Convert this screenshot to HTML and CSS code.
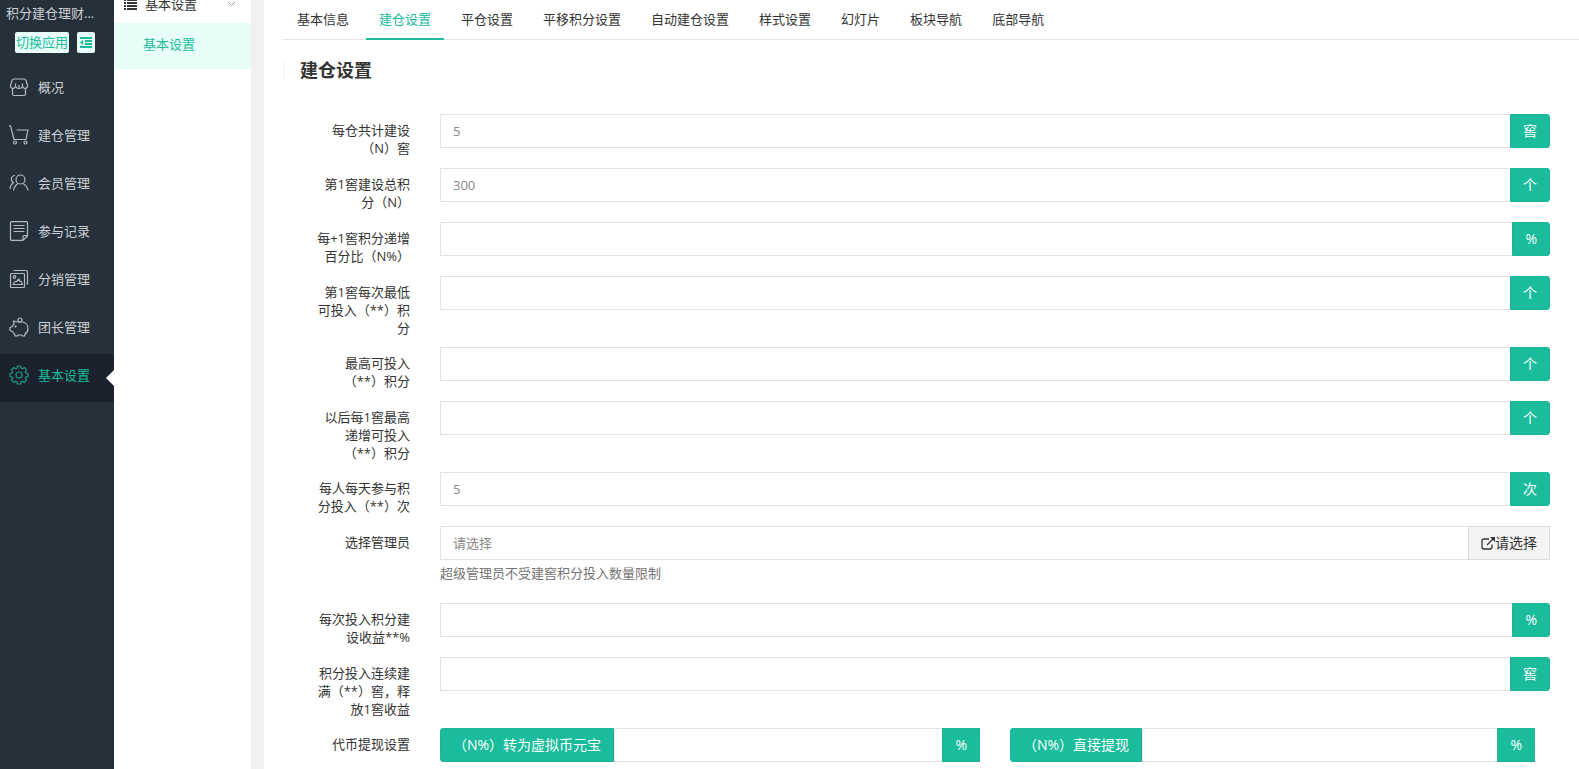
FILE: index.html
```html
<!DOCTYPE html>
<html lang="zh-CN">
<head>
<meta charset="utf-8">
<title>建仓设置</title>
<link rel="stylesheet" href="styles.css">
</head>
<body>
<div class="app">
  <aside class="sidebar">
    <div class="app-name">积分建仓理财...</div>
    <div class="app-tools">
      <button type="button" class="tool">切换应用</button>
      <button type="button" class="tool tool-icon" aria-label="收起菜单">
        <svg width="12" height="11" viewBox="0 0 12 11" fill="currentColor"><path d="M0 0h12v2H0zM5 3h7v2H5zM5 6h7v2H5zM0 9h12v2H0zM3 3v5L0 5.500z"/></svg>
      </button>
    </div>
    <nav class="menu">
      <a class="menu-item" href="#"><svg class="icon" viewBox="0 0 20 20"><path d="M5 2h10q1.500 0 2 1.500L18.500 8c.8 4-4.300 4.500-5 1-.5 3.300-6.500 3.300-7 0-.7 3.500-5.800 3-5-1L3 3.500Q3.500 2 5 2zM6.500 9V6.500M13.500 9V6.500M10 11V8M3.500 11.500V17q0 1.500 1.500 1.500h10q1.500 0 1.500-1.500v-5.500"/></svg>概况</a>
      <a class="menu-item" href="#"><svg class="icon" viewBox="0 0 20 20"><path d="M0 .8h1.500L5 14.500h12M7.500 5H19l-2 9.500"/><circle cx="6" cy="17.500" r="1.500"/><circle cx="16.500" cy="17.500" r="1.500"/></svg>建仓管理</a>
      <a class="menu-item" href="#"><svg class="icon" viewBox="0 0 20 20"><circle cx="11.500" cy="6.500" r="4.500"/><path d="M9 10.500c-2.500 1.500-4 4-4.500 7M14 10.500c2.500 1.500 4.500 4 5 7M6 2.500C3 2.500 2 5 2.500 7c.3 1.300 1 2 2 2.500C2.500 11 1.200 13 1 16"/></svg>会员管理</a>
      <a class="menu-item" href="#"><svg class="icon" viewBox="0 0 20 20"><path d="M2.500.7h15q1 0 1 1V15L14 19.300H2.500q-1 0-1-1V1.700q0-1 1-1zM18.500 14.500H15q-1 0-1 1v4M4.500 4.500h11M4.500 7.500h11M4.500 10.500h11"/></svg>参与记录</a>
      <a class="menu-item" href="#"><svg class="icon" viewBox="0 0 20 20"><path d="M2.500 4.500h12q1 0 1 1v12q0 1-1 1h-12q-1 0-1-1v-12q0-1 1-1zM4.500 1.500h13q1 0 1 1v12.500h-1M4 15.500l2-3h1.500L10 10l1 2.500h1l1.500 3z"/><circle cx="5.500" cy="8" r="1.300"/></svg>分销管理</a>
      <a class="menu-item" href="#"><svg class="icon" viewBox="0 0 20 20"><path d="M8.500 5h5c3.500.5 5.500 3.500 5.500 6.500 0 2.500-1.300 4.500-3 5.500l-.5 2h-2.500l-.5-1H9l-.5 1H6l-.5-2c-1-.8-1.500-1.700-2-2.500L1 13.500v-3l2-.7c.5-1 1-1.700 2-2.500L4.500 4z"/><circle cx="11" cy="3" r="2"/><circle cx="6.500" cy="9.500" r=".5"/></svg>团长管理</a>
      <a class="menu-item active" href="#"><svg class="icon" viewBox="0 0 20 20"><path d="M8.300 1h3.400l.3 2.100 1.500.6 1.700-1.300 2.400 2.400-1.300 1.700.6 1.500 2.100.3v3.400l-2.100.3-.6 1.500 1.300 1.700-2.400 2.400-1.700-1.300-1.500.6-.3 2.100H8.300L8 16.900l-1.500-.6-1.700 1.300-2.400-2.400 1.300-1.700-.6-1.500L1 11.700V8.300L3.100 8l.6-1.500-1.300-1.700 2.400-2.400 1.700 1.300L8 3.100z"/><circle cx="10" cy="10" r="3"/></svg>基本设置</a>
    </nav>
  </aside>

  <aside class="subnav">
    <a class="subnav-head" href="#">
      <svg width="13" height="11" viewBox="0 0 13 11" fill="currentColor"><path d="M0 0h2v2H0zM3 0h10v2H3zM0 3h2v2H0zM3 3h10v2H3zM0 6h2v2H0zM3 6h10v2H3zM0 9h2v2H0zM3 9h10v2H3z"/></svg>
      <span>基本设置</span>
      <svg class="chevron" width="9" height="6" viewBox="0 0 9 6"><path d="M1 1l3.500 3.500L8 1"/></svg>
    </a>
    <a class="subnav-item" href="#">基本设置</a>
  </aside>

  <main class="main">
    <nav class="tabs">
      <a class="tab" href="#">基本信息</a>
      <a class="tab active" href="#">建仓设置</a>
      <a class="tab" href="#">平仓设置</a>
      <a class="tab" href="#">平移积分设置</a>
      <a class="tab" href="#">自动建仓设置</a>
      <a class="tab" href="#">样式设置</a>
      <a class="tab" href="#">幻灯片</a>
      <a class="tab" href="#">板块导航</a>
      <a class="tab" href="#">底部导航</a>
    </nav>
    <h1 class="title">建仓设置</h1>
    <form class="form">
      <div class="row"><label for="f1">每仓共计建设（N）窖</label><div class="field"><div class="group"><input id="f1" type="text" value="5"><span class="addon">窖</span></div></div></div>
      <div class="row"><label for="f2">第1窖建设总积分（N）</label><div class="field"><div class="group"><input id="f2" type="text" value="300"><span class="addon">个</span></div></div></div>
      <div class="row"><label for="f3">每+1窖积分递增百分比（N%）</label><div class="field"><div class="group"><input id="f3" type="text"><span class="addon">%</span></div></div></div>
      <div class="row"><label for="f4">第1窖每次最低可投入（**）积分</label><div class="field"><div class="group"><input id="f4" type="text"><span class="addon">个</span></div></div></div>
      <div class="row"><label for="f5">最高可投入（**）积分</label><div class="field"><div class="group"><input id="f5" type="text"><span class="addon">个</span></div></div></div>
      <div class="row"><label for="f6">以后每1窖最高递增可投入（**）积分</label><div class="field"><div class="group"><input id="f6" type="text"><span class="addon">个</span></div></div></div>
      <div class="row"><label for="f7">每人每天参与积分投入（**）次</label><div class="field"><div class="group"><input id="f7" type="text" value="5"><span class="addon">次</span></div></div></div>
      <div class="row"><label for="f8">选择管理员</label><div class="field"><div class="group"><input id="f8" type="text" placeholder="请选择"><button type="button" class="pick"><svg width="14" height="13" viewBox="0 0 14 13"><path class="line" d="M8 2H3Q1 2 1 4v6q0 2 2 2h6q2 0 2-2V7.500M6 8l6-6"/><path fill="currentColor" d="M9 0h5v5z"/></svg>请选择</button></div><p class="help">超级管理员不受建窖积分投入数量限制</p></div></div>
      <div class="row"><label for="f9">每次投入积分建设收益**%</label><div class="field"><div class="group"><input id="f9" type="text"><span class="addon">%</span></div></div></div>
      <div class="row"><label for="f10">积分投入连续建满（**）窖，释放1窖收益</label><div class="field"><div class="group"><input id="f10" type="text"><span class="addon">窖</span></div></div></div>
      <div class="row"><label for="to-coin">代币提现设置</label><div class="field pair">
        <div class="group"><label class="addon prefix" for="to-coin">（N%）转为虚拟币元宝</label><input id="to-coin" type="text"><span class="addon square">%</span></div>
        <div class="group"><label class="addon prefix" for="to-cash">（N%）直接提现</label><input id="to-cash" type="text"><span class="addon square">%</span></div>
      </div></div>
    </form>
  </main>
</div>
</body>
</html>
```
FILE: styles.css
```css
* { box-sizing: border-box; }
body {
  margin: 0;
  color: #333;
  background: #fff;
  font: 13px/18px "Open Sans", "Noto Sans CJK SC", sans-serif;
}
a { color: inherit; text-decoration: none; }
input, button { font: inherit; }
.app { display: flex; height: 100vh; overflow: hidden; }

.sidebar { flex: none; width: 114px; background: #26303b; color: #ccd0d4; }
.app-name { padding: 4px 6px 0; white-space: nowrap; }
.app-tools { display: flex; gap: 8px; padding: 10px 0 13px 15px; }
.tool {
  height: 21px;
  padding: 0 1px;
  border: 0;
  border-radius: 2px;
  background: #e8fdf8;
  color: #1abc9c;
  line-height: 19px;
}
.tool-icon { display: flex; align-items: center; justify-content: center; width: 18px; }
.menu-item {
  position: relative;
  display: flex;
  align-items: center;
  gap: 9px;
  height: 48px;
  padding: 0 0 6px 9px;
}
.icon { width: 20px; height: 20px; fill: none; stroke: #b4babf; stroke-width: 1.2; stroke-linejoin: round; }
.menu-item.active { background: #1b222d; color: #1abc9c; }
.menu-item.active .icon { stroke: #1a9c84; }
.menu-item.active::after {
  content: "";
  position: absolute;
  top: 16px;
  right: 0;
  border: 8px solid transparent;
  border-left: 0;
  border-right-color: #fff;
}

.subnav { flex: none; width: 137px; }
.subnav-head {
  display: flex;
  align-items: center;
  gap: 8px;
  height: 38px;
  margin-top: -15px;
  padding: 0 15px 0 10px;
}
.chevron { margin-left: auto; fill: none; stroke: #999; }
.subnav-item { display: block; padding-left: 29px; background: #e8fdf8; color: #1abc9c; line-height: 42px; height: 46px; }

.main { flex: 1; min-width: 0; padding-left: 19px; border-left: 13px solid #f1f1f1; }
.tabs { display: flex; gap: 4px; border-bottom: 1px solid #e5e5e5; padding-left: 1px; }
.tab { height: 40px; margin-bottom: -1px; padding: 0 13px; line-height: 38px; border-bottom: 2px solid transparent; white-space: nowrap; }
.tab.active { color: #1abc9c; border-color: #1abc9c; }
.title { margin: 21px 0 35px; padding-left: 15px; border-left: 2px solid #f8f8f8; font-size: 18px; line-height: 18px; }

.row { display: grid; grid-template-columns: 96px minmax(0, 1fr); gap: 30px; margin-bottom: 10px; padding: 0 29px 0 31px; }
.row > label { padding-top: 7px; text-align: right; }
.field { padding-bottom: 10px; }
.group { display: flex; height: 34px; }
.group input {
  flex: 1;
  min-width: 0;
  padding: 0 12px;
  border: 1px solid #e2e2e2;
  border-right: 0;
  background: #fff;
  color: #888;
}
.group input::placeholder { color: #888; opacity: 1; }
.addon {
  padding: 0 12px;
  border: 1px solid #1cb595;
  border-radius: 0 3px 3px 0;
  background: #1abc9c;
  color: #fff;
  font-size: 14px;
  line-height: 32px;
  white-space: nowrap;
}
.addon.square { border-radius: 0; }
.addon.prefix { border-radius: 3px 0 0 3px; }
.pick { display: flex; align-items: center; padding: 0 12px; border: 1px solid #ddd; background: #f3f3f3; color: #333; font-size: 14px; }
.pick .line { fill: none; stroke: currentColor; stroke-width: 1.3; }
.help { margin: 4px 0 0; padding-bottom: 1px; color: #737373; }
.pair { display: grid; grid-template-columns: 1fr 1fr; gap: 30px; }
.pair .group:last-child { margin-right: 15px; }
```
